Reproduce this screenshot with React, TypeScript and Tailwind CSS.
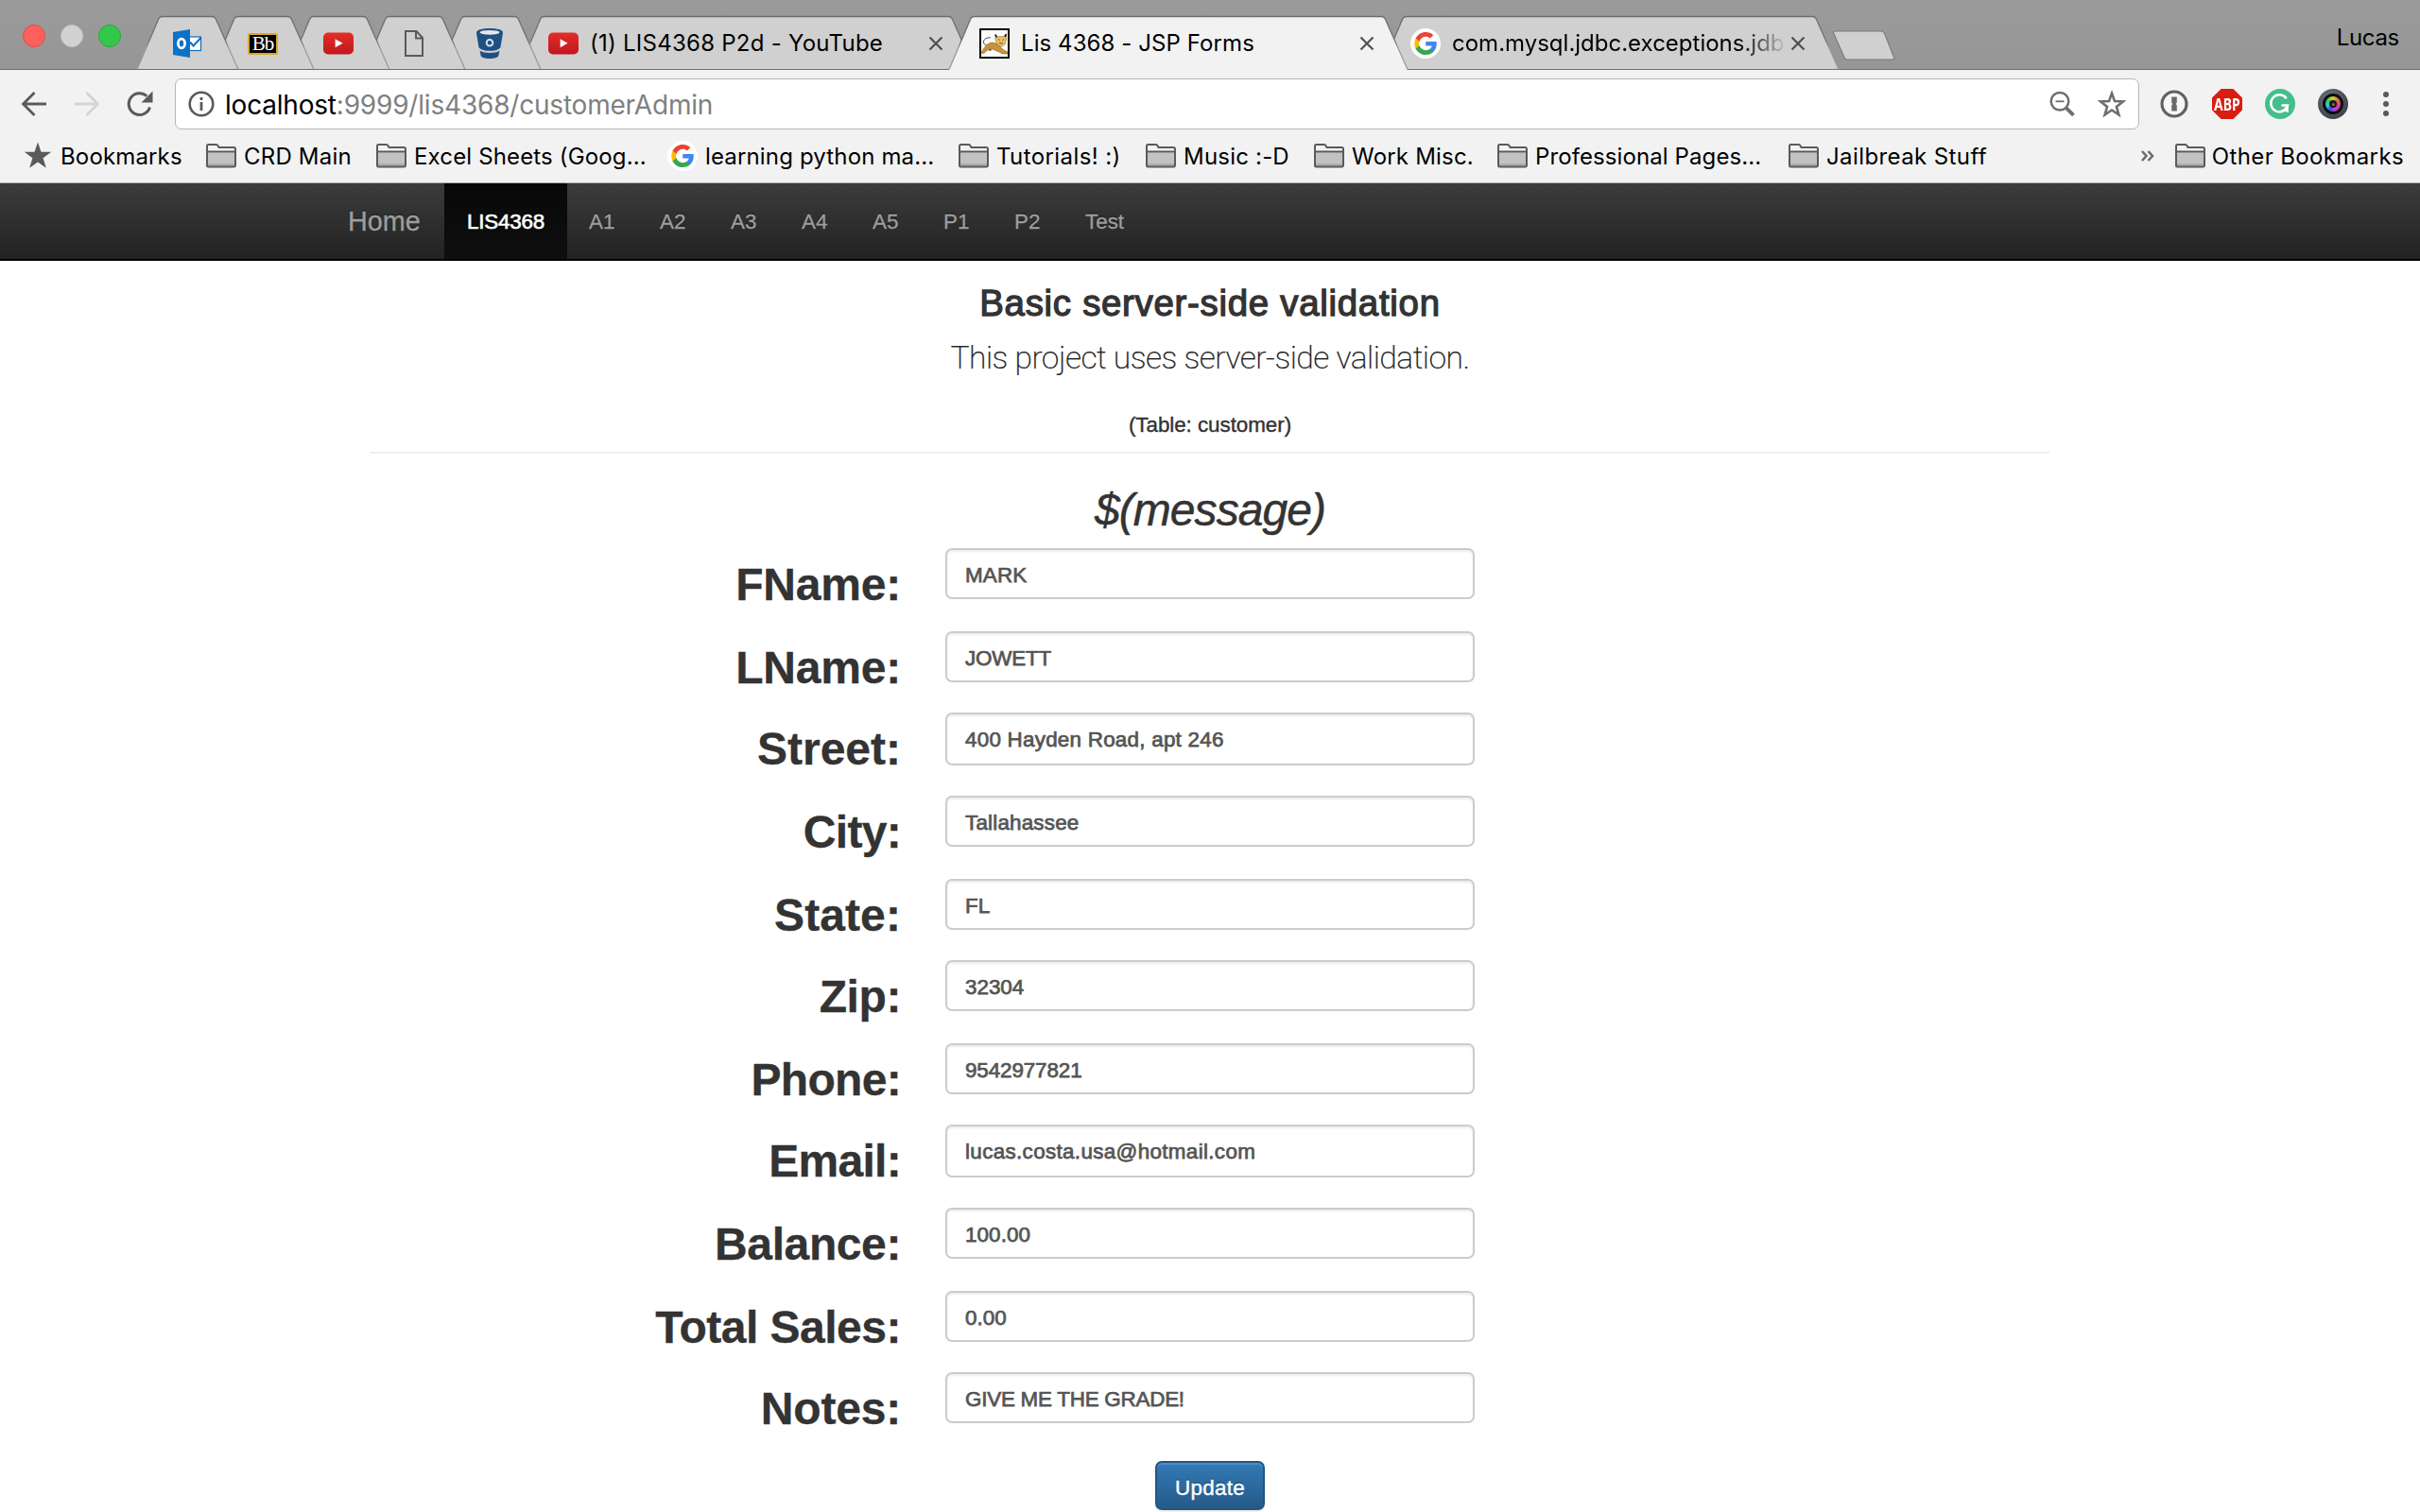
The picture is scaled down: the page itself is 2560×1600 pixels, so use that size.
import React from "react";

/* ---------- icons ---------- */

const OutlookIcon = () => (
  <svg width="32" height="32" viewBox="0 0 32 32">
    <rect x="15" y="9" width="15.5" height="14.5" fill="#fff" stroke="#0a6ec4" strokeWidth="1.2" />
    <path d="M19 14.5l3.500 4L30.500 10" fill="none" stroke="#0a6ec4" strokeWidth="2" />
    <path d="M1 4L19 1v30L1 28z" fill="#0a72c7" />
    <ellipse cx="10" cy="16" rx="3.6" ry="4.8" fill="none" stroke="#fff" strokeWidth="2.800" />
  </svg>
);

const BlackboardIcon = () => (
  <div className="flex h-[23px] w-8 items-center justify-center rounded-[2px] border-2 border-[#d9a92c] bg-black font-['Liberation_Serif',serif] text-[21px] leading-none tracking-[-1px] text-white">
    <span>Bb</span>
  </div>
);

const YouTubeIcon = () => (
  <svg width="32" height="32" viewBox="0 0 32 32">
    <defs>
      <linearGradient id="yt" x1="0" y1="0" x2="0" y2="1">
        <stop offset="0" stopColor="#e52d27" />
        <stop offset="1" stopColor="#bf171d" />
      </linearGradient>
    </defs>
    <rect x="0" y="4.5" width="32" height="23" rx="5" fill="url(#yt)" />
    <path d="M12.6 11.2v9l8-4.5z" fill="#fff" />
  </svg>
);

const PageIcon = () => (
  <svg width="32" height="32" viewBox="0 0 32 32" fill="none" stroke="#5a5a5a" strokeWidth="2">
    <path d="M7 3h11.5l6.5 7v19H7z" />
    <path d="M18 3v7.500h7" />
  </svg>
);

const BucketIcon = () => (
  <svg width="32" height="32" viewBox="0 0 32 32">
    <path
      d="M2 4.200C2 1.600 8 0 16 0s14 1.600 14 4.200c0 1.500-2.300 14.300-2.600 16-.4 1.800-5 3.600-11.400 3.600S5 22 4.600 20.200C4.300 18.500 2 5.700 2 4.200z"
      fill="#205081"
    />
    <ellipse cx="16" cy="4.300" rx="10.500" ry="2.400" fill="#e3e8ee" />
    <circle cx="16" cy="15.200" r="3.300" fill="none" stroke="#d8dfe8" strokeWidth="2" />
    <path d="M4.600 21.500C8 24.500 11.500 25.300 16 25.300s8-.8 11.400-3.800" fill="none" stroke="#d0d0d0" strokeWidth="1.600" />
    <path d="M5.500 23.500C8 25.300 11.500 26 16 26s8-.7 10.500-2.500L25.300 29c-.6 1.900-4.300 3-9.300 3s-8.700-1.100-9.300-3z" fill="#205081" />
  </svg>
);

const TomcatIcon = () => (
  <svg width="32" height="32" viewBox="0 0 32 32">
    <rect x="1" y="1" width="30" height="30" fill="#fff" stroke="#000" strokeWidth="2" />
    <path d="M12 10C8.500 9 4 11.500 4.500 15c.5 3 4 2.500 5.500 5" fill="none" stroke="#444" strokeWidth="1" />
    <path d="M8.500 18.500l3.500 5" stroke="#111" strokeWidth="2" />
    <path d="M2 26c2-4 4.500-8.500 9-10.500 2.500-.8 5-.3 7 .5l4 3.500c2.500 2.500 5 4.200 8 5.500v2h-5c-4.500-1.800-8-4-11.500-5-4 .2-6.500 1.800-8.500 4.500z" fill="#c8923a" stroke="#7a5a1e" strokeWidth=".5" />
    <path d="M17 6.500l2.500 2.300h5.500L28.500 6v6L27 17l-4 2.500-3.800-2L17 12z" fill="#ecc05f" stroke="#6b5220" strokeWidth=".5" />
    <path d="M17 6.500l1.300 3M28.500 6L27 9" stroke="#111" strokeWidth="1.500" />
    <path d="M20 11.500l1.500 1M26 11.500l-1.500 1M21 15l2 1.300 2-1.300" fill="none" stroke="#5a4218" strokeWidth=".9" />
  </svg>
);

const GoogleIcon = () => (
  <svg width="32" height="32" viewBox="0 0 32 32">
    <circle cx="16" cy="16" r="16" fill="#fff" />
    <g transform="translate(4 4)">
      <path fill="#4285F4" d="M23.760 12.270c0-.79-.07-1.540-.19-2.270H12.260v4.510h6.470c-.29 1.480-1.140 2.730-2.400 3.580v3h3.860c2.260-2.090 3.560-5.170 3.560-8.820z" />
      <path fill="#34A853" d="M12.260 24c3.240 0 5.950-1.080 7.930-2.910l-3.860-3c-1.080.72-2.450 1.160-4.070 1.160-3.130 0-5.780-2.110-6.730-4.960H1.550v3.090C3.520 21.300 7.570 24 12.260 24z" />
      <path fill="#FBBC05" d="M5.530 14.290c-.25-.72-.38-1.490-.38-2.290s.14-1.570.38-2.290V6.620H1.550A11.900 11.900 0 0 0 .26 12c0 1.940.47 3.760 1.290 5.380z" />
      <path fill="#EA4335" d="M12.260 4.750c1.770 0 3.350.61 4.600 1.800l3.420-3.420C18.210 1.190 15.500 0 12.260 0 7.570 0 3.520 2.700 1.550 6.620l3.980 3.090c.95-2.850 3.600-4.960 6.730-4.960z" />
    </g>
  </svg>
);

const FolderIcon = () => (
  <svg width="32" height="26" viewBox="0 0 32 26">
    <path d="M1 9.500h30V23a1.500 1.500 0 0 1-1.500 1.500h-27A1.500 1.500 0 0 1 1 23z" fill="#c2c2c2" />
    <path d="M2 21.200h28v2.500H2z" fill="#a9a9a9" />
    <path d="M1 9V2.500A1.500 1.500 0 0 1 2.500 1h8.300c1 0 1.400.6 1.900 1.500l.8 1.500h16A1.500 1.500 0 0 1 31 5.500V23a1.500 1.500 0 0 1-1.500 1.500h-27A1.500 1.500 0 0 1 1 23V8.600h30" fill="none" stroke="#5a5a5a" strokeWidth="2" />
  </svg>
);

const StarSolid = () => (
  <svg width="32" height="32" viewBox="0 0 32 32">
    <path d="M16 1.500l3.500 10.200h10.700l-8.600 6.500 3.200 10.500L16 22.400l-8.800 6.300 3.200-10.500-8.600-6.500h10.700z" fill="#5a5a5a" />
  </svg>
);

const CloseIcon = () => (
  <svg width="16" height="16" viewBox="0 0 16 16" stroke="#505050" strokeWidth="2.200">
    <path d="M1.500 1.500l13 13M14.500 1.500l-13 13" />
  </svg>
);

const CameraIcon = () => (
  <div className="flex size-8 items-center justify-center rounded-full bg-[radial-gradient(circle_at_40%_30%,#6d747f,#4a4f58_55%,#34383f)]">
    <div className="flex size-[22px] items-center justify-center rounded-full bg-[#0c0d10]">
      <div className="flex size-[16px] items-center justify-center rounded-full bg-[conic-gradient(#d8cf3c,#e0783c_12%,#d83c9c_30%,#c43be0_45%,#3552e0_58%,#35c9d8_70%,#3cc95a_85%,#d8cf3c)]">
        <div className="flex size-[8px] items-center justify-center rounded-full bg-[#16181c]">
          <div className="size-[3px] rounded-full bg-[#8b6b5c]" />
        </div>
      </div>
    </div>
  </div>
);

/* ---------- tab strip ---------- */

function TabShape({ width, active }: { width: number; active?: boolean }) {
  const edge = `M0 56.500L22.700 3Q24 .5 26.500 .5H${width - 27.500}Q${width - 25} .5 ${width - 23.700} 3L${width} 56.500`;
  return (
    <svg className="absolute inset-0 -z-10" width={width} height="57" viewBox={`0 0 ${width} 57`} overflow="visible">
      <defs>
        <linearGradient id="tabEdge" gradientUnits="userSpaceOnUse" x1="0" y1="0" x2="0" y2="57">
          <stop offset="0" stopColor="#6c6c6c" />
          <stop offset=".45" stopColor="#727272" />
          <stop offset=".6" stopColor="#9a9a9a" />
          <stop offset="1" stopColor="#9a9a9a" />
        </linearGradient>
      </defs>
      <path d={edge + "V57H0z"} fill={active ? "#f2f2f2" : "#d0d0d0"} />
      <path d={edge} fill="none" stroke="url(#tabEdge)" strokeWidth="1.300" />
      {!active && <path d={`M0 56.500H${width}`} stroke="#6f6f6f" />}
    </svg>
  );
}

function SmallTab({ children, z }: { children: React.ReactNode; z: string }) {
  return (
    <div className={`relative isolate -mr-[27px] flex h-[57px] w-[107px] shrink-0 items-center pt-px pl-[37px] ${z}`}>
      <TabShape width={107} />
      {children}
    </div>
  );
}

function TabStrip() {
  return (
    <div className="relative flex h-[74px] items-end bg-linear-to-b from-[#9b9b9b] to-[#969696]">
      <div className="absolute bottom-0 left-0 h-px w-full bg-[#6f6f6f]" />
      <div className="flex h-[72px] w-[145px] shrink-0 gap-4 self-start pt-[26px] pl-6">
        <div className="size-6 rounded-full border border-[#e24b41] bg-[#fc615c]" />
        <div className="size-6 rounded-full border border-[#c4c4c4] bg-[#d2d2d2]" />
        <div className="size-6 rounded-full border border-[#27aa35] bg-[#34c84a]" />
      </div>
      <SmallTab z="z-[9]"><OutlookIcon /></SmallTab>
      <SmallTab z="z-[8]"><BlackboardIcon /></SmallTab>
      <SmallTab z="z-[7]"><YouTubeIcon /></SmallTab>
      <SmallTab z="z-[6]"><PageIcon /></SmallTab>
      <SmallTab z="z-[5]"><BucketIcon /></SmallTab>
      <div className="relative isolate z-[4] ml-1 flex h-[57px] w-[482px] shrink-0 items-center pt-px pl-[31px]">
        <TabShape width={482} />
        <YouTubeIcon />
        <span className="ml-[12px] w-[358px] whitespace-nowrap tracking-[0.250px]">(1) LIS4368 P2d - YouTube</span>
        <CloseIcon />
      </div>
      <div className="relative isolate z-10 -ml-[27px] flex h-[57px] w-[485px] shrink-0 items-center pt-px pl-8">
        <TabShape width={485} active />
        <TomcatIcon />
        <span className="ml-[12px] w-[358px] whitespace-nowrap tracking-[0.080px]">Lis 4368 - JSP Forms</span>
        <CloseIcon />
      </div>
      <div className="relative isolate z-[3] -ml-[28px] flex h-[57px] w-[484px] shrink-0 items-center pt-px pl-[31px]">
        <TabShape width={484} />
        <GoogleIcon />
        <span className="ml-[12px] w-[354px] bg-linear-to-r from-black from-83% to-[#cfcfcf] bg-clip-text whitespace-nowrap text-transparent">
          com.mysql.jdbc.exceptions.jdb
        </span>
        <span className="ml-[4px]"><CloseIcon /></span>
      </div>
      <svg className="-ml-[8px] mb-[9px] shrink-0" width="68" height="33" viewBox="0 0 68 33">
        <path d="M4.500 1H53q2.500 0 3.400 2L66.500 28.500q1 2.500-1.500 2.500H17.500q-2.500 0-3.400-2L2.800 3.500Q2 1 4.500 1z" fill="#d0d0d0" stroke="#7b7b7b" strokeWidth="1.200" />
      </svg>
      <span className="mr-[22px] mb-[19px] ml-auto tracking-[-0.300px]">Lucas</span>
    </div>
  );
}

/* ---------- toolbar ---------- */

function Toolbar() {
  return (
    <div className="flex h-[72px] items-center">
      <svg className="ml-[20px] shrink-0" width="32" height="32" viewBox="0 0 32 32" fill="none" stroke="#5a5a5a" strokeWidth="2.800">
        <path d="M29 16H4.500M16.500 4L4.500 16l12 12" />
      </svg>
      <svg className="ml-[24px] shrink-0" width="32" height="32" viewBox="0 0 32 32" fill="none" stroke="#d4d4d4" strokeWidth="2.800">
        <path d="M3 16h24.500M15.500 4l12 12-12 12" />
      </svg>
      <svg className="ml-[24px] shrink-0" width="32" height="32" viewBox="0 0 32 32">
        <path d="M26.500 19.500A11.400 11.400 0 1 1 23.300 7.600" fill="none" stroke="#5a5a5a" strokeWidth="3" />
        <path d="M29.500 2.500v12h-12z" fill="#5a5a5a" />
      </svg>
      <div className="ml-[21px] flex h-[54px] w-[2078px] items-center rounded-[7px] border-[1.500px] border-[#b5b5b5] bg-white">
        <svg className="ml-[11px] shrink-0" width="32" height="32" viewBox="0 0 32 32">
          <circle cx="16" cy="16" r="12.300" fill="none" stroke="#5a5a5a" strokeWidth="2.600" />
          <path d="M14.600 14h2.800v9h-2.800zM14.600 9h2.800v3h-2.800z" fill="#5a5a5a" />
        </svg>
        <span className="ml-[9px] pt-px text-[28px] whitespace-nowrap tracking-[-0.200px] text-[#808080]">
          <span className="text-black">localhost</span>:9999/lis4368/customerAdmin
        </span>
        <svg className="ml-auto shrink-0" width="32" height="32" viewBox="0 0 32 32" fill="none" stroke="#6e6e6e">
          <circle cx="13" cy="13.300" r="9.300" strokeWidth="2.500" />
          <path d="M8.500 13.300h9" strokeWidth="1.800" />
          <path d="M19.800 20.300l7.700 7.500" strokeWidth="3.800" />
        </svg>
        <svg className="mr-[12px] ml-5 shrink-0" width="32" height="32" viewBox="0 0 32 32" fill="none" stroke="#6e6e6e" strokeWidth="2.600">
          <path d="M16 4.800l3 8.300 8.900.3-7 5.500 2.500 8.600L16 22.500l-7.400 5 2.500-8.600-7-5.500 8.900-.3z" />
        </svg>
      </div>
      <svg className="ml-[21px] shrink-0" width="32" height="32" viewBox="0 0 32 32">
        <circle cx="16" cy="16" r="13" fill="#f6f6f6" stroke="#616161" strokeWidth="3.200" />
        <path d="M13.200 8.500h5.600v6l-1.200 1.500 1.200 1.500v6h-5.600v-6l1.200-1.500-1.200-1.500z" fill="#6a6a6a" />
      </svg>
      <div className="ml-6 flex size-8 shrink-0 items-center justify-center bg-[#d81e10] font-['Noto_Sans',sans-serif] text-[17px] leading-none font-bold text-white [clip-path:polygon(30%_0,70%_0,100%_30%,100%_70%,70%_100%,30%_100%,0_70%,0_30%)]">
        <span className="scale-x-[0.820]">ABP</span>
      </div>
      <svg className="ml-6 shrink-0" width="32" height="32" viewBox="0 0 32 32">
        <circle cx="16" cy="16" r="16" fill="#44be8b" />
        <path d="M22.700 10.200A9 9 0 1 0 24 17.500h-6.500" fill="none" stroke="#fff" strokeWidth="2.500" />
        <path d="M24.800 17v8l-7-2z" fill="#fff" />
      </svg>
      <div className="ml-6 shrink-0"><CameraIcon /></div>
      <div className="ml-[37px] flex flex-col gap-1">
        <div className="size-[6px] rounded-full bg-[#5a5a5a]" />
        <div className="size-[6px] rounded-full bg-[#5a5a5a]" />
        <div className="size-[6px] rounded-full bg-[#5a5a5a]" />
      </div>
    </div>
  );
}

/* ---------- bookmarks bar ---------- */

const bookmarks = [
  { label: "Bookmarks", icon: "star", cls: "w-[194px] tracking-[0.150px]" },
  { label: "CRD Main", icon: "folder", cls: "w-[180px] tracking-[0.200px]" },
  { label: "Excel Sheets (Goog...", icon: "folder", cls: "w-[308px] tracking-[0.150px]" },
  { label: "learning python ma...", icon: "google", cls: "w-[308px] tracking-[0.150px]" },
  { label: "Tutorials! :)", icon: "folder", cls: "w-[198px] tracking-[0.400px]" },
  { label: "Music :-D", icon: "folder", cls: "w-[178px] tracking-[0.200px]" },
  { label: "Work Misc.", icon: "folder", cls: "w-[194px] tracking-[0.200px]" },
  { label: "Professional Pages...", icon: "folder", cls: "w-[308px] tracking-[0.100px]" },
  { label: "Jailbreak Stuff", icon: "folder", cls: "w-[220px] tracking-[0.400px]" },
];

function BookmarksBar() {
  return (
    <div className="flex h-[48px] border-b border-[#b2b2b2] pr-[17px] pb-[9px] pl-6 whitespace-nowrap">
      {bookmarks.map((b) => (
        <div key={b.label} className={`flex shrink-0 items-center gap-[8px] ${b.cls}`}>
          {b.icon === "star" ? <StarSolid /> : b.icon === "google" ? <GoogleIcon /> : <FolderIcon />}
          <span className="pt-[2px]">{b.label}</span>
        </div>
      ))}
      <div className="ml-auto flex items-center">
        <svg className="mr-[21px]" width="16" height="14" viewBox="0 0 16 14" fill="none" stroke="#6e6e6e" strokeWidth="2.600">
          <path d="M2 2l4.500 5L2 12M8.500 2L13 7l-4.500 5" />
        </svg>
        <FolderIcon />
        <span className="ml-[7px] pt-[2px] tracking-[0.380px]">Other Bookmarks</span>
      </div>
    </div>
  );
}

/* ---------- page ---------- */

const navItems = ["A1", "A2", "A3", "A4", "A5", "P1", "P2", "Test"];

function Navbar() {
  return (
    <nav className="flex h-[82px] border-b-2 border-black bg-linear-to-b from-[#3c3c3c] to-[#222222] pl-[344px] text-[22.400px] leading-[80px] text-[#9d9d9d] [text-shadow:0_-2px_0_rgba(0,0,0,.25)]">
      <a className="w-[126px] pl-6 text-[28.800px] [-webkit-text-stroke:0.300px_#9d9d9d]">Home</a>
      <a className="w-[130px] bg-linear-to-b from-[#080808] to-[#0f0f0f] text-center tracking-[-0.200px] text-white [-webkit-text-stroke:0.600px_white]"><span className="block pt-px">LIS4368</span></a>
      {navItems.map((n) => (
        <a key={n} className="w-[75px] pt-px pl-[23px] [-webkit-text-stroke:0.300px_#9d9d9d]">{n}</a>
      ))}
    </nav>
  );
}

const fields = [
  { label: "FName:", value: "MARK", row: "h-[88px]", box: "h-[54px] tracking-[0.200px]", track: "tracking-[-0.200px]" },
  { label: "LName:", value: "JOWETT", row: "h-[86px]", box: "h-[54px] tracking-[-0.150px]", track: "tracking-[-0.200px]" },
  { label: "Street:", value: "400 Hayden Road, apt 246", row: "h-[88px]", box: "h-[56px] tracking-[0.250px]", track: "tracking-[0px]" },
  { label: "City:", value: "Tallahassee", row: "h-[88px]", box: "h-[54px] tracking-[0.200px]", track: "tracking-[-0.700px]" },
  { label: "State:", value: "FL", row: "h-[86px]", box: "h-[54px]", track: "tracking-[0.100px]" },
  { label: "Zip:", value: "32304", row: "h-[88px]", box: "h-[54px]", track: "tracking-[-0.400px]" },
  { label: "Phone:", value: "9542977821", row: "h-[86px]", box: "h-[54px] tracking-[-0.100px]", track: "tracking-[-0.700px]" },
  { label: "Email:", value: "lucas.costa.usa@hotmail.com", row: "h-[88px]", box: "h-[56px] tracking-[0.350px]", track: "tracking-[-0.700px]" },
  { label: "Balance:", value: "100.00", row: "h-[88px]", box: "h-[54px] tracking-[0.100px]", track: "tracking-[-0.400px]" },
  { label: "Total Sales:", value: "0.00", row: "h-[86px]", box: "h-[54px]", track: "tracking-[-0.500px]" },
  { label: "Notes:", value: "GIVE ME THE GRADE!", row: "h-[88px]", box: "h-[54px] tracking-[-0.230px]", track: "tracking-[-0.200px]" },
];

export default function App() {
  return (
    <div className="flex h-[1600px] w-[2560px] flex-col overflow-hidden bg-white">
      <header className="bg-[#f2f2f2] font-['Inter',sans-serif] text-[24px] leading-[30px] text-black">
        <TabStrip />
        <Toolbar />
        <BookmarksBar />
      </header>
      <main className="flex flex-col font-['Liberation_Sans',Arial,sans-serif] text-[#333]">
        <Navbar />
        <h3 className="mt-[24px] h-[42px] text-center text-[38.400px] leading-[42px] tracking-[0.720px] [-webkit-text-stroke:1.300px_#333]">
          Basic server-side validation
        </h3>
        <p className="mt-[13px] h-[48px] text-center font-['Roboto',sans-serif] text-[33.600px] leading-[48px] font-extralight tracking-[-0.520px] text-[#222] [-webkit-text-stroke:0.200px_#222]">
          This project uses server-side validation.
        </p>
        <p className="mt-[31px] h-8 text-center text-[22.400px] leading-8 tracking-[-0.050px] [-webkit-text-stroke:0.400px_#333]">
          (Table: customer)
        </p>
        <hr className="mx-auto mt-[12px] w-[1776px] border-t-2 border-[#eee]" />
        <h2 className="mt-[33px] h-[53px] text-center text-[48px] leading-[53px] tracking-[-0.950px] italic [-webkit-text-stroke:0.500px_#333]">
          $(message)
        </h2>
        <form className="mt-[14px] flex flex-col">
          {fields.map((f) => (
            <div key={f.label} className={`flex items-start ${f.row}`}>
              <label className={`w-[953px] pt-[12px] text-right text-[48px] leading-[53px] font-bold [-webkit-text-stroke:0.300px_#333] ${f.track}`}>{f.label}</label>
              <div className={`ml-[47px] w-[560px] rounded-[7px] border-2 border-[#ccc] pl-[19px] text-[22.400px] leading-[53px] text-[#555] shadow-[inset_0_2px_2px_rgba(0,0,0,.075)] [-webkit-text-stroke:0.750px_#555] ${f.box}`}>
                {f.value}
              </div>
            </div>
          ))}
          <button className="mx-auto mt-[6px] h-[52px] w-[116px] rounded-[7px] border-2 border-[#245580] bg-linear-to-b from-[#337ab7] to-[#265a88] pt-[5px] text-[22.400px] leading-[44px] tracking-[0.300px] text-white [text-shadow:0_-2px_0_rgba(0,0,0,.2)] [-webkit-text-stroke:0.400px_white] shadow-[inset_0_2px_0_rgba(255,255,255,.15),0_2px_2px_rgba(0,0,0,.075)]">
            Update
          </button>
        </form>
      </main>
    </div>
  );
}
